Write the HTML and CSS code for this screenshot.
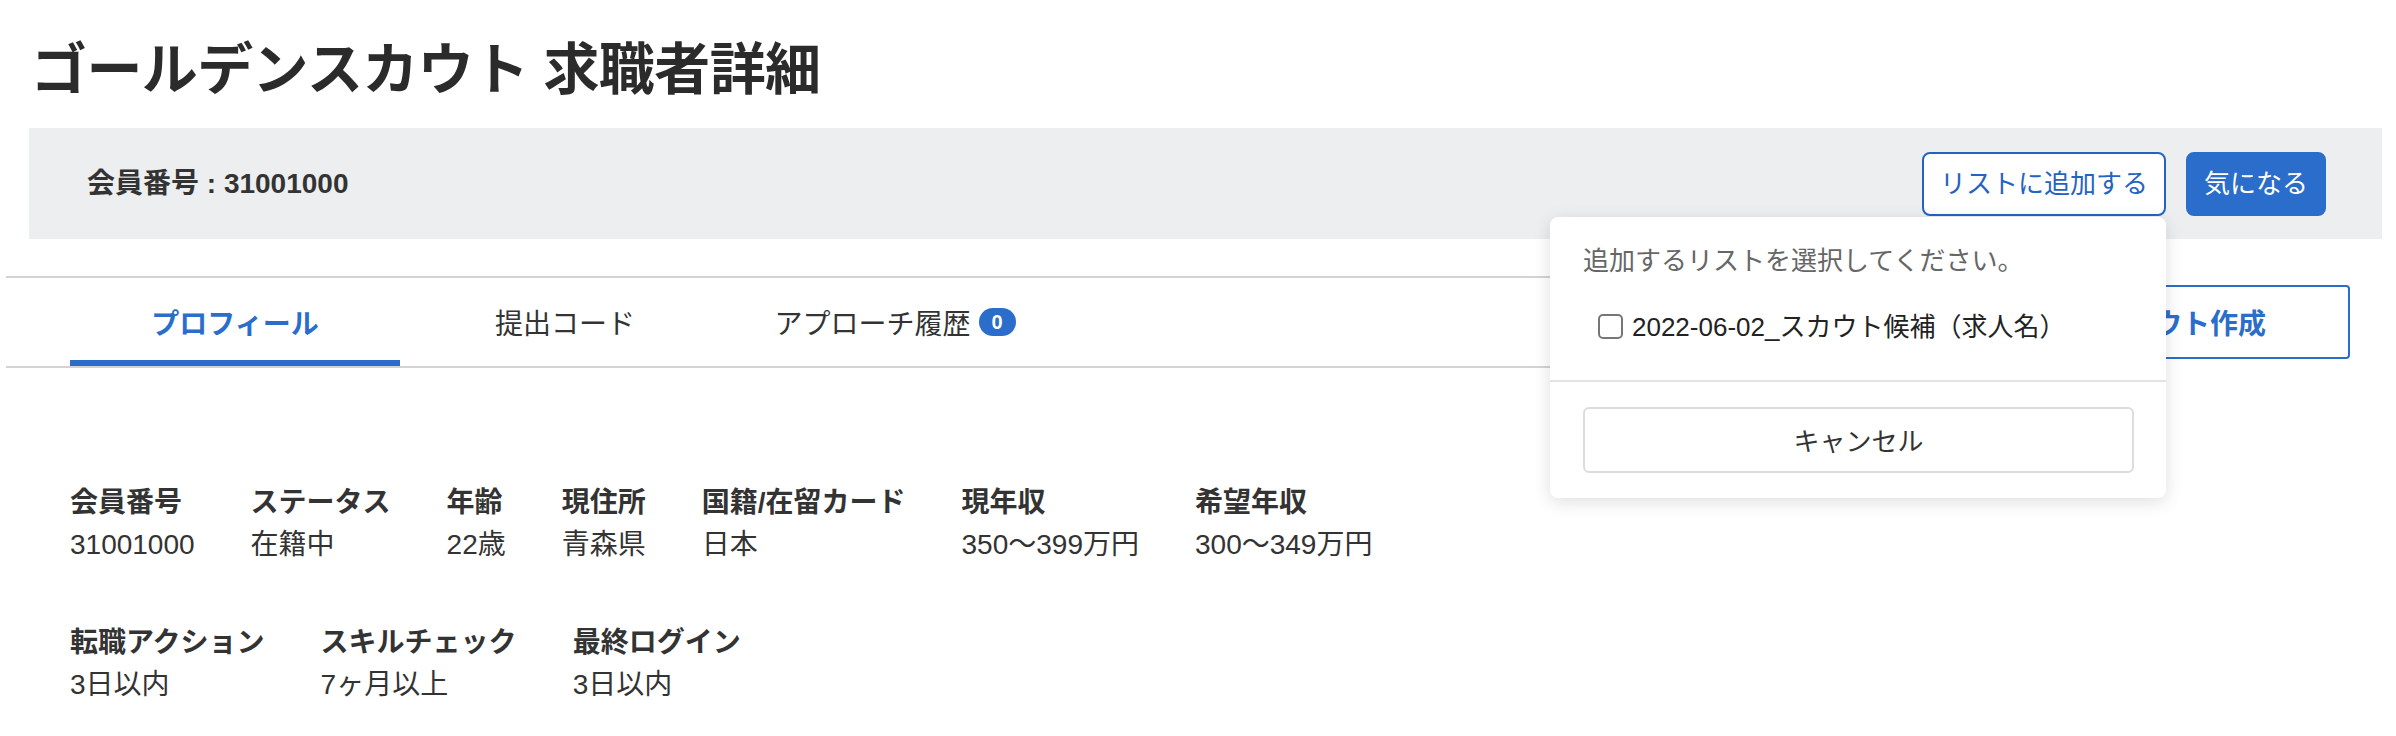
FILE: index.html
```html
<!DOCTYPE html>
<html lang="ja">
<head>
<meta charset="utf-8">
<title>ゴールデンスカウト 求職者詳細</title>
<link rel="stylesheet" href="styles.css">
</head>
<body>
<div class="page">
  <h1 class="title">ゴールデンスカウト 求職者詳細</h1>

  <div class="member-bar">
    <div class="member-id">会員番号 : 31001000</div>
    <div class="actions">
      <div class="dropdown">
        <button class="btn btn-outline" type="button">リストに追加する</button>
        <div class="dropdown-menu">
          <div class="menu-body">
            <p class="menu-msg">追加するリストを選択してください。</p>
            <label class="check-row"><input type="checkbox" class="check"><span>2022-06-02_スカウト候補（求人名）</span></label>
          </div>
          <div class="menu-footer">
            <button class="btn-cancel" type="button">キャンセル</button>
          </div>
        </div>
      </div>
      <button class="btn btn-primary" type="button">気になる</button>
    </div>
  </div>

  <div class="tab-row">
    <nav class="tabs">
      <a class="tab active">プロフィール</a>
      <a class="tab">提出コード</a>
      <a class="tab">アプローチ履歴<span class="badge">0</span></a>
    </nav>
    <button class="btn-scout" type="button">スカウト作成</button>
  </div>

  <section class="profile">
    <div class="info-row">
      <div class="item"><div class="label">会員番号</div><div class="value">31001000</div></div>
      <div class="item"><div class="label">ステータス</div><div class="value">在籍中</div></div>
      <div class="item"><div class="label">年齢</div><div class="value">22歳</div></div>
      <div class="item"><div class="label">現住所</div><div class="value">青森県</div></div>
      <div class="item"><div class="label">国籍/在留カード</div><div class="value">日本</div></div>
      <div class="item"><div class="label">現年収</div><div class="value">350〜399万円</div></div>
      <div class="item"><div class="label">希望年収</div><div class="value">300〜349万円</div></div>
    </div>
    <div class="info-row">
      <div class="item"><div class="label">転職アクション</div><div class="value">3日以内</div></div>
      <div class="item"><div class="label">スキルチェック</div><div class="value">7ヶ月以上</div></div>
      <div class="item"><div class="label">最終ログイン</div><div class="value">3日以内</div></div>
    </div>
  </section>
</div>
</body>
</html>
```

FILE: styles.css
```css
* { box-sizing: border-box; }

body {
  margin: 0;
  background: #fff;
  color: #333;
  font-family: "Liberation Sans", "Noto Sans CJK JP", sans-serif;
}

.page {
  width: 2396px;
}

.title {
  margin: 36px 0 0 31px;
  font-size: 56px;
  line-height: 67px;
  font-weight: 700;
  color: #2b2b2b;
  letter-spacing: -0.6px;
}

.member-bar {
  margin: 25px 14px 0 29px;
  height: 111px;
  background: #edeef0;
  display: flex;
  align-items: center;
  justify-content: space-between;
  padding: 0 56px 0 58px;
}

.member-id {
  font-size: 28px;
  line-height: 42px;
  font-weight: 700;
  color: #333;
}

.actions {
  display: flex;
  align-items: center;
  gap: 20px;
}

.dropdown {
  position: relative;
}

.btn {
  height: 64px;
  padding: 0 16px;
  font-family: inherit;
  font-size: 26px;
  line-height: 40px;
  border-radius: 8px;
  border: 2px solid #2563c2;
  cursor: pointer;
}

.btn-outline {
  background: #fff;
  color: #2563c2;
}

.btn-primary {
  background: #2a6dcb;
  border-color: #2a6dcb;
  color: #fff;
}

.dropdown-menu {
  position: absolute;
  top: 65px;
  right: 0;
  width: 616px;
  background: #fff;
  border-radius: 8px;
  box-shadow: 0 4px 18px rgba(0, 0, 0, 0.13);
  z-index: 10;
}

.menu-body {
  padding: 23px 33px 32px;
}

.menu-msg {
  margin: 0;
  font-size: 26px;
  line-height: 42px;
  color: #666;
}

.check-row {
  margin-top: 24px;
  padding-left: 15px;
  display: flex;
  align-items: center;
  gap: 9px;
  font-size: 26px;
  line-height: 42px;
  color: #222;
}

.check {
  appearance: none;
  -webkit-appearance: none;
  margin: 0;
  width: 25px;
  height: 25px;
  border: 2px solid #767676;
  border-radius: 5px;
  background: #fff;
  flex: none;
}

.menu-footer {
  border-top: 2px solid #e2e2e4;
  padding: 25px 32px 25px 33px;
}

.btn-cancel {
  display: block;
  width: 100%;
  height: 66px;
  background: #fff;
  border: 2px solid #dcdcdf;
  border-radius: 6px;
  font-family: inherit;
  font-size: 26px;
  color: #333;
}

.tab-row {
  margin: 37px 46px 0 6px;
  display: flex;
  align-items: center;
}

.tabs {
  flex: 1;
  margin-right: 24px;
  display: flex;
  padding-left: 64px;
  border-top: 2px solid #d3d3d7;
  border-bottom: 2px solid #d3d3d7;
}

.tab {
  width: 330px;
  height: 88px;
  display: flex;
  align-items: center;
  justify-content: center;
  font-size: 28px;
  color: #333;
  text-decoration: none;
}

.tab.active {
  color: #2a6dcb;
  font-weight: 700;
  box-shadow: inset 0 -6px 0 #2a6dcb;
}

.badge {
  margin-left: 8px;
  min-width: 37px;
  height: 28px;
  padding: 0 10px;
  border-radius: 14px;
  background: #2a6dcb;
  color: #fff;
  font-size: 20px;
  font-weight: 700;
  line-height: 28px;
  text-align: center;
}

.btn-scout {
  width: 336px;
  height: 74px;
  background: #fff;
  border: 2px solid #2a6dcb;
  border-radius: 4px;
  color: #2a6dcb;
  font-family: inherit;
  font-size: 28px;
  font-weight: 700;
}

.profile {
  margin-top: 114px;
  padding-left: 70px;
}

.info-row {
  display: flex;
  gap: 56px;
}

.info-row + .info-row {
  margin-top: 56px;
}

.label {
  font-size: 28px;
  line-height: 42px;
  font-weight: 700;
  color: #333;
}

.value {
  font-size: 28px;
  line-height: 42px;
  color: #333;
}
```
